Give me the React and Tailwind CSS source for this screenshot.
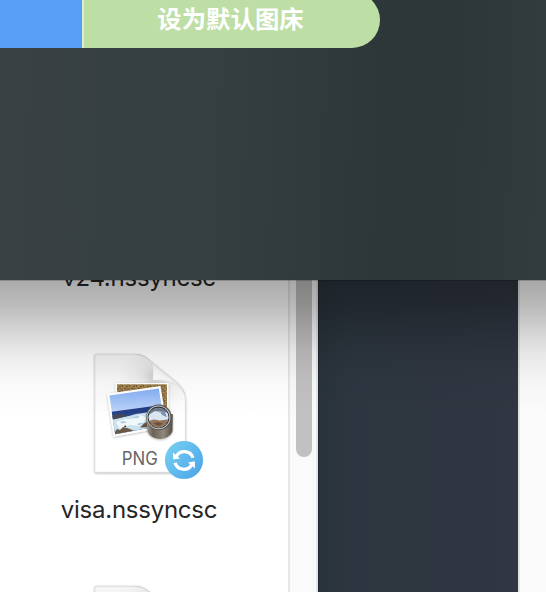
const pagePath =
  "M94.9 354.2 H134 C142 354.2 146 357 151 361.5 L176 382 C182 387 185.4 392 185.4 401 V472.3 H94.9 Z";

function FileIcon({ id, label }) {
  return (
    <svg width="130" height="145" viewBox="84 344 130 145" className="block shrink-0">
      <defs>
        <linearGradient id={`${id}-page`} x1="0" y1="0" x2="0" y2="1">
          <stop offset="0" stopColor="#f4f4f4" />
          <stop offset="0.3" stopColor="#fbfbfb" />
          <stop offset="0.6" stopColor="#ffffff" />
        </linearGradient>
        <radialGradient id={`${id}-bend`} gradientUnits="userSpaceOnUse" cx="155" cy="377" r="38">
          <stop offset="0" stopColor="#777" stopOpacity="0.36" />
          <stop offset="0.35" stopColor="#999" stopOpacity="0.16" />
          <stop offset="1" stopColor="#bbb" stopOpacity="0" />
        </radialGradient>
        <linearGradient id={`${id}-fold`} gradientUnits="userSpaceOnUse" x1="153" y1="382" x2="164" y2="369">
          <stop offset="0" stopColor="#ffffff" />
          <stop offset="0.7" stopColor="#f8f8f8" />
          <stop offset="1" stopColor="#d8d8d8" />
        </linearGradient>
        <linearGradient id={`${id}-sky`} x1="0" y1="0" x2="0" y2="1">
          <stop offset="0" stopColor="#85aef5" />
          <stop offset="0.5" stopColor="#bcd3f8" />
        </linearGradient>
        <linearGradient id={`${id}-sea`} x1="0" y1="0" x2="0" y2="1">
          <stop offset="0" stopColor="#20367f" />
          <stop offset="1" stopColor="#3a639f" />
        </linearGradient>
        <linearGradient id={`${id}-barrel`} x1="0" y1="0" x2="1" y2="0">
          <stop offset="0" stopColor="#a19a91" />
          <stop offset="0.25" stopColor="#6c6257" />
          <stop offset="0.65" stopColor="#91877a" />
          <stop offset="1" stopColor="#554c43" />
        </linearGradient>
        <linearGradient id={`${id}-badge`} x1="0" y1="0.1" x2="1" y2="0.9">
          <stop offset="0" stopColor="#76d1f1" />
          <stop offset="1" stopColor="#4ca3e9" />
        </linearGradient>
        <pattern id={`${id}-sand`} width="7" height="5" patternUnits="userSpaceOnUse">
          <rect width="7" height="5" fill="#9c7d4a" />
          <path d="M0 1h2v1H0zM3 0h1v2H3zM5 3h2v1H5zM1 3.5h2v1H1z" fill="#755a38" />
          <path d="M2 2h1v1H2zM5 1h1v1H5zM4 4h1v1H4z" fill="#b7985f" />
        </pattern>
        <clipPath id={`${id}-lens`}>
          <circle cx="158.5" cy="417.6" r="9.9" />
        </clipPath>
        <clipPath id={`${id}-clip`}>
          <path d={pagePath} />
        </clipPath>
        <filter id={`${id}-shadow`} x="-20%" y="-20%" width="140%" height="140%">
          <feDropShadow dx="0" dy="0.8" stdDeviation="0.9" floodColor="#000" floodOpacity="0.3" />
        </filter>
      </defs>

      <path d={pagePath} fill={`url(#${id}-page)`} stroke="#cccccc" strokeWidth="0.6" filter={`url(#${id}-shadow)`} />
      <path d={pagePath} fill={`url(#${id}-bend)`} clipPath={`url(#${id}-clip)`} />
      <path
        d="M135 354.3 C144 354.3 152.8 360 152.8 369 V380.5 C164 379 178 382 184.5 394 C182.5 388 179 383.5 174 380 L151 361.5 C146 357.3 142 354.3 135 354.3 Z"
        fill={`url(#${id}-fold)`}
        stroke="#cccccc"
        strokeWidth="0.4"
      />

      <g filter={`url(#${id}-shadow)`}>
        <rect x="115.5" y="383" width="53" height="38" fill="#fff" />
        <rect x="117" y="384.3" width="50" height="35" fill={`url(#${id}-sand)`} />
      </g>
      <g filter={`url(#${id}-shadow)`}>
        <path d="M107 393.7 L160.5 386 L167 427 L113.6 436.8 Z" fill="#fff" />
        <path d="M109.4 395.4 L158.8 388.4 L164.6 425 L115.2 434.3 Z" fill={`url(#${id}-sky)`} />
        <path d="M111.7 411.8 L161.5 405 L164.6 425 L115.2 434.3 Z" fill={`url(#${id}-sea)`} />
        <path d="M112.6 419 L121 417.5 L129 416 L136 414 L147 412.5 L162.5 411 L164.6 425 L115.2 434.3 Z" fill="#c9e2ed" />
        <path d="M116 422 L126 419 L132 419 L140 415 L147 418 L140 426 L129 425 L120 429 Z" fill="#f1f8fa" />
        <path d="M120 422 l4 -1 l3 1.5 l-5 1 z M133 417 l5 -1 l2 1 l-4 1.5 z M137 424 l4 -1.5 l2 1 l-4 2 z" fill="#a9cada" />
        <path d="M112.4 416 L116 414 L119 415.5 L121 413.5 L127 416 L118 418.5 L113 419.6 Z" fill="#45484e" />
        <path d="M114.8 432 L117 429 L120 430 L123 427 L128 428.3 L134 430.7 L115.2 434.3 Z" fill="#6b5848" />
        <path d="M140 427.5 L144 423.5 L148 421 L156 427 Z" fill="#675340" />
        <path d="M124 427 l1.2 -2 l1.2 2 z" fill="#30343a" />
      </g>

      <g filter={`url(#${id}-shadow)`}>
        <path d="M146.3 417 L147.4 431 C150 441 169 442 172.5 431 L172.8 414 Z" fill={`url(#${id}-barrel)`} />
        <circle cx="158.9" cy="417.4" r="12.8" fill="#5c554d" />
      </g>
      <circle cx="158.5" cy="417.4" r="11.4" fill="#30353a" stroke="#bac5cc" strokeWidth="1.1" />
      <g clipPath={`url(#${id}-lens)`}>
        <rect x="148" y="407" width="22" height="22" fill="#a8b6c7" />
        <path d="M149 410 Q159 405 169 412 V414 Q158 408 149 414Z" fill="#6d7887" />
        <path d="M148 416 L155 411 L161 413 L169 412 L169 421 L148 421 Z" fill="#dce6f0" />
        <path d="M161 411 l4 1 l2 5 l-3 -1 l-3 -2 z" fill="#7d93b8" />
        <path d="M148 421 L154 419.5 L160 420.5 L170 419 V429 H148 Z" fill="#957557" />
        <path d="M153 423.5 l5 -1.5 l5 1.5 l-4 2.5 z" fill="#6b523b" />
      </g>

      {label && (
        <text
          x="121.8"
          y="465"
          textLength="36"
          lengthAdjust="spacingAndGlyphs"
          fontSize="18"
          fill="#666666"
          className="font-[Inter,sans-serif]"
        >
          {label}
        </text>
      )}

      <circle cx="184" cy="460" r="19.1" fill={`url(#${id}-badge)`} />
      <g fill="none" stroke="#fff" strokeWidth="3.3">
        <path d="M176.2 456.4 A9.2 9.2 0 0 1 193 457.8" />
        <path d="M191.8 464.6 A9.2 9.2 0 0 1 175 462.8" />
      </g>
      <path d="M173 452.6 L173.2 459.6 L180 458.4 Z" fill="#fff" />
      <path d="M195 468.4 L194.8 461.3 L188 462.6 Z" fill="#fff" />
    </svg>
  );
}

function FileName({ children, className }) {
  return (
    <div className={`h-[30px] shrink-0 whitespace-nowrap text-center font-[Inter,sans-serif] text-[24px] leading-[30px] text-[#262626] ${className}`}>
      {children}
    </div>
  );
}

export default function App() {
  return (
    <div className="flex h-[592px] w-[546px] flex-col overflow-hidden bg-white">
      <div className="h-[280px] shrink-0 overflow-hidden bg-[linear-gradient(92deg,#394142_0%,#353e40_40%,#2d3739_70%,#2d3739_82%,#323b3d_100%)]">
        <div className="-mt-2 flex h-14 w-[380px]">
          <div className="h-14 w-[82px] bg-[#589ff8]" />
          <button className="h-14 w-[298px] rounded-r-[28px] border-l-2 border-[#dceecb] bg-[#bddea5] pb-1 pr-[3px] text-center font-['Noto_Sans_CJK_SC',sans-serif] text-[24.4px] font-bold leading-[52px] text-white">
            设为默认图床
          </button>
        </div>
      </div>

      <div className="relative flex h-[312px] shrink-0 overflow-hidden">
        <div className="flex w-72 shrink-0 flex-col overflow-hidden bg-white">
          <FileName className="-mt-[17px] w-[278px] tracking-[-0.25px]">v24.nssyncsc</FileName>
          <div className="mt-[51px] pl-[84px]">
            <FileIcon id="visa" label="PNG" />
          </div>
          <FileName className="mt-[6px] w-[278px] tracking-[-0.25px]">visa.nssyncsc</FileName>
          <div className="mt-[51px] pl-[84px]">
            <FileIcon id="next" />
          </div>
        </div>
        <div className="w-[30px] shrink-0 border-x-2 border-[#e6e6e6] bg-[#fafafa] pl-1.5">
          <div className="h-[177px] w-4 rounded-b-full bg-[#c1c1c1]" />
        </div>
        <div className="w-[200px] shrink-0 border-l border-[#1f2730] bg-[linear-gradient(90deg,#29333b_0%,#2d3640_15%,#2f3641_60%,#303742_100%)]" />
        <div className="flex-1 border-l-2 border-[#e5e5e5] bg-[#fbfbfb]" />

        <div className="pointer-events-none absolute inset-x-0 top-0 h-[135px] bg-[linear-gradient(180deg,rgba(0,0,0,0.45)_0px,rgba(0,0,0,0.45)_1px,rgba(0,0,0,0.33)_1px,rgba(0,0,0,0.26)_20%,rgba(0,0,0,0.16)_38%,rgba(0,0,0,0.08)_55%,rgba(0,0,0,0.025)_75%,rgba(0,0,0,0)_100%)]" />
      </div>
    </div>
  );
}
